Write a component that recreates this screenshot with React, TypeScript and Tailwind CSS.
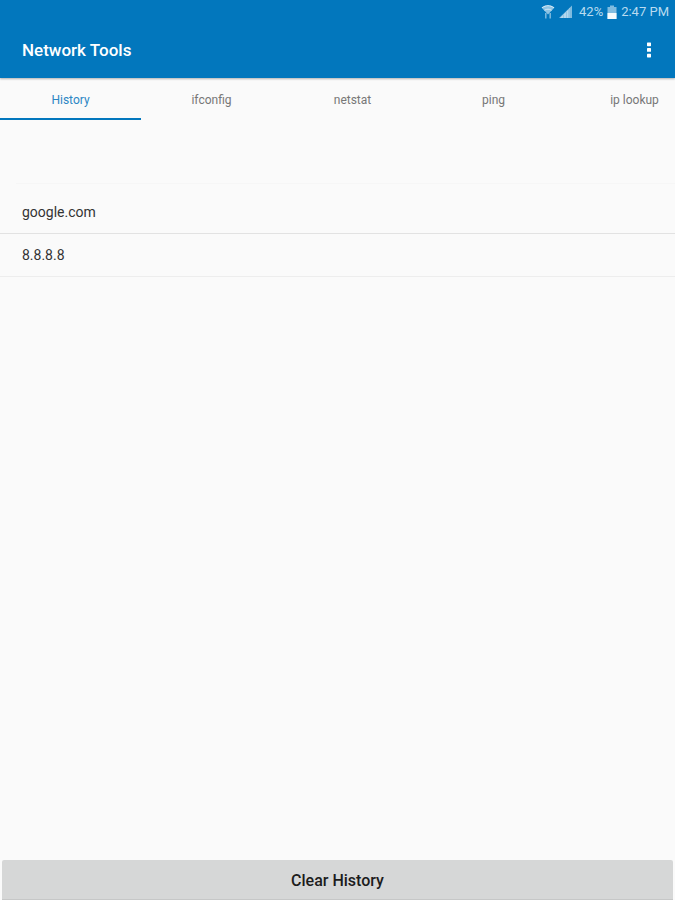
import { useState } from "react";

const tabs = ["History", "ifconfig", "netstat", "ping", "ip lookup"];

function StatusBar() {
  return (
    <div className="flex h-6 items-center justify-end pr-1.5 text-[13px] leading-6 text-[#b9dbf0]">
      <svg viewBox="0 0 14 16" className="mr-1 h-4 w-3.5" aria-hidden="true">
        <path d="M.5 3.500C4.500 .5 9.500 .5 13.500 3.500L7 10.500Z" fill="#8fc4e4" />
        <path d="M1 3.800C5 1 9 1 13 3.800M3.500 6.300C5.800 4.800 8.200 4.800 10.500 6.300" fill="none" stroke="#d3e9f6" />
        <path d="M4.800 9v5.500M9.200 14.500V9" fill="none" stroke="#7db9de" strokeWidth="1.500" />
      </svg>
      <svg viewBox="0 0 14 14" className="mr-1.5 h-3.5 w-3.5" aria-hidden="true">
        <path d="M0 13 13 .5V13Z" fill="#7fbbdf" />
        <path d="M1 13 9.500 4.500V13Z" fill="#b5d8ee" />
        <path d="M4.500 9v4M7.500 6v7M10.500 3v10" stroke="#93c6e5" />
      </svg>
      <span>42%</span>
      <svg viewBox="0 0 10 14" className="mx-1 h-3.5 w-2.5" aria-hidden="true">
        <path d="M3 0.500h4v1.500h2.500v12h-9V2H3Z" fill="#80bce0" />
        <path d="M.5 8h9v6h-9Z" fill="#f4fafd" />
      </svg>
      <span>2:47 PM</span>
    </div>
  );
}

export default function App() {
  const [active, setActive] = useState("History");
  const [history, setHistory] = useState(["google.com", "8.8.8.8"]);

  return (
    <div className="flex min-h-screen flex-col bg-[#fafafa] font-[Roboto,sans-serif] text-[#333333]">
      <header className="relative bg-[#0277bd] shadow-[0_1px_2px_rgba(0,0,0,0.3)]">
        <StatusBar />
        <div className="flex h-[54px] items-center justify-between pr-4 pb-0.5 pl-[22px]">
          <h1 className="text-[17px] leading-6 font-medium text-white">Network Tools</h1>
          <button aria-label="More options" className="flex h-8 w-5 items-center justify-center">
            <svg viewBox="0 0 4 16" className="h-4 w-1" fill="#ffffff" aria-hidden="true">
              <rect y="0.500" width="4" height="3.700" rx="0.600" />
              <rect y="6.100" width="4" height="3.700" rx="0.600" />
              <rect y="11.700" width="4" height="3.700" rx="0.600" />
            </svg>
          </button>
        </div>
      </header>

      <nav role="tablist" className="flex h-[42px] overflow-hidden text-xs">
        {tabs.map((tab) => (
          <button
            key={tab}
            role="tab"
            aria-selected={tab === active}
            onClick={() => setActive(tab)}
            className={
              tab === active
                ? "w-[141px] shrink-0 border-b-2 border-[#0277bd] pt-1 text-[#2b86c4]"
                : "w-[141px] shrink-0 border-b-2 border-transparent pt-1 text-[#777777]"
            }
          >
            {tab}
          </button>
        ))}
      </nav>

      <main className="flex flex-1 flex-col">
        <div className="mb-[7px] ml-4 h-16 border-b border-[#f6f6f6]" />
        <ul className="flex-1 text-sm">
          {history.map((host) => (
            <li key={host} className="flex h-[43px] items-center border-b border-[#e2e2e2] px-[22px] last:border-[#ededed]">
              {host}
            </li>
          ))}
        </ul>
        <button
          onClick={() => setHistory([])}
          className="mx-0.5 h-10 rounded-t-xs border-b border-[#c6c7c7] bg-[#d6d7d7] pt-0.5 text-base font-medium text-[#1c1c1c]"
        >
          Clear History
        </button>
      </main>
    </div>
  );
}
